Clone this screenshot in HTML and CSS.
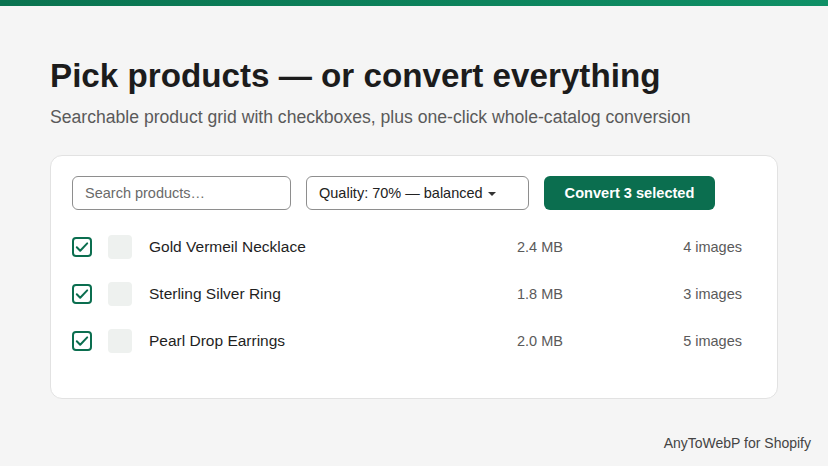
FILE: index.html
```html
<!DOCTYPE html>
<html lang="en">

  <head>
    <meta charset="UTF-8">
    <meta name="viewport" content="width=device-width, initial-scale=1.0">
    <title>Pick products</title>
    <link rel="stylesheet" href="styles.css">
  </head>

  <body>
    <div class="page">
      <div class="topbar"></div>
      <div class="main">
        <h1 class="title">Pick products — or convert everything</h1>
        <p class="subtitle">Searchable product grid with checkboxes, plus one-click whole-catalog conversion</p>

        <div class="card">
          <div class="controls">
            <div class="search">Search products…</div>
            <div class="quality">Quality: 70% — balanced <span class="caret"></span></div>
            <div class="btn">Convert 3 selected</div>
          </div>

          <ul class="list">
            <li class="row">
              <span class="check"><svg viewBox="0 0 20 20" width="20" height="20"><path d="M4.8 10.2l3.4 3.5L15.2 6.4" /></svg></span>
              <span class="thumb"></span>
              <span class="name">Gold Vermeil Necklace</span>
              <span class="size">2.4 MB</span>
              <span class="count">4 images</span>
            </li>
            <li class="row">
              <span class="check"><svg viewBox="0 0 20 20" width="20" height="20"><path d="M4.8 10.2l3.4 3.5L15.2 6.4" /></svg></span>
              <span class="thumb"></span>
              <span class="name">Sterling Silver Ring</span>
              <span class="size">1.8 MB</span>
              <span class="count">3 images</span>
            </li>
            <li class="row">
              <span class="check"><svg viewBox="0 0 20 20" width="20" height="20"><path d="M4.8 10.2l3.4 3.5L15.2 6.4" /></svg></span>
              <span class="thumb"></span>
              <span class="name">Pearl Drop Earrings</span>
              <span class="size">2.0 MB</span>
              <span class="count">5 images</span>
            </li>
          </ul>
        </div>
      </div>
      <div class="footer">AnyToWebP for Shopify</div>
    </div>
  </body>

</html>
```

FILE: styles.css
```css
* {
  padding: 0;
  margin: 0;
  box-sizing: border-box;
}

ul {
  list-style: none;
}

body {
  background-color: #f5f5f5;
  font-family: "Liberation Sans", Arial, sans-serif;
  color: #1f1f1f;
}

.page {
  height: 466px;
  display: flex;
  flex-direction: column;
}

.topbar {
  height: 6px;
  background: linear-gradient(90deg, #0a7350, #0f9066);
}

.main {
  padding: 51px 50px 0;
}

.title {
  font-size: 33.2px;
  line-height: 38px;
  font-weight: 700;
  color: #1c1c1c;
}

.subtitle {
  margin-top: 11px;
  font-size: 17.6px;
  line-height: 22px;
  color: #5a5a5a;
}

.card {
  margin-top: 27px;
  background-color: #fff;
  border: 1px solid #e2e2e2;
  border-radius: 12px;
  padding: 20px 21px 34px;
}

.controls {
  display: flex;
  gap: 15px;
  align-items: center;
}

.search,
.quality {
  height: 34px;
  border: 1px solid #8e8e8e;
  border-radius: 6px;
  background-color: #fff;
  font-size: 14.5px;
  line-height: 32px;
  padding: 0 12px;
}

.search {
  width: 219px;
  color: #6a6a6a;
}

.quality {
  width: 223px;
  color: #222;
}

.caret {
  display: inline-block;
  width: 0;
  height: 0;
  border-left: 4px solid transparent;
  border-right: 4px solid transparent;
  border-top: 4.5px solid #333;
  vertical-align: middle;
  margin-left: 1px;
}

.btn {
  width: 171px;
  height: 34px;
  border-radius: 6px;
  background-color: #0b6e4f;
  color: #fff;
  font-size: 14.6px;
  font-weight: 700;
  line-height: 34px;
  text-align: center;
}

.list {
  margin-top: 13px;
}

.row {
  display: flex;
  align-items: center;
  height: 47px;
  padding-right: 14px;
}

.check {
  width: 20px;
  height: 20px;
  border: 2px solid #0b6e4f;
  border-radius: 4px;
  display: flex;
  align-items: center;
  justify-content: center;
  margin-right: 16px;
}

.check svg {
  flex: none;
  fill: none;
  stroke: #0b6e4f;
  stroke-width: 2;
  stroke-linecap: round;
  stroke-linejoin: round;
}

.thumb {
  width: 24px;
  height: 24px;
  border-radius: 4px;
  background-color: #eef1ef;
  margin-right: 17px;
}

.name {
  flex: 1;
  font-size: 15.5px;
  color: #1f1f1f;
}

.size {
  width: 120px;
  font-size: 14.5px;
  color: #5a5a5a;
}

.count {
  width: 105px;
  text-align: right;
  font-size: 14.5px;
  color: #5a5a5a;
}

.footer {
  margin-top: auto;
  padding: 0 17px 15px 0;
  text-align: right;
  font-size: 14px;
  color: #444;
}
```
